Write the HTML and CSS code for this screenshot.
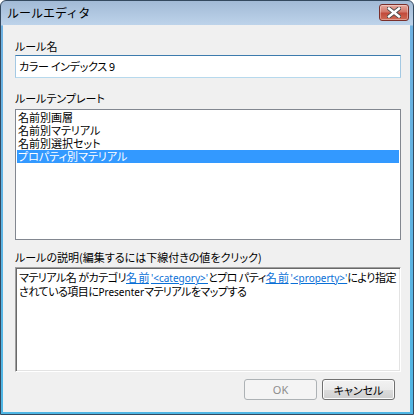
FILE: index.html
```html
<!DOCTYPE html>
<html lang="ja">
<head>
<meta charset="utf-8">
<link rel="stylesheet" href="styles.css">
</head>
<body>
<div class="window">
  <div class="titlebar">
    <span class="title">ルールエディタ</span>
    <div class="close">
      <svg width="14" height="11" viewBox="0 0 14 11">
        <path d="M2 1.5 L12 9.5 M12 1.5 L2 9.5" stroke="#4a4a4a" stroke-width="4.2" stroke-linecap="square"/>
        <path d="M2 1.5 L12 9.5 M12 1.5 L2 9.5" stroke="#ffffff" stroke-width="2.4" stroke-linecap="square"/>
      </svg>
    </div>
  </div>
  <div class="client">
    <div class="label l1">ルール名</div>
    <div class="input">カラー インデックス 9</div>
    <div class="label l2">ルールテンプレート</div>
    <div class="listbox">
      <div class="item">名前別画層</div>
      <div class="item">名前別マテリアル</div>
      <div class="item">名前別選択セット</div>
      <div class="item selected">プロパティ別マテリアル</div>
    </div>
    <div class="label l3">ルールの説明(編集するには下線付きの値をクリック)</div>
    <div class="desc">
      <div class="line">マテリアル名 がカテゴリ<span class="link">名 前</span> <span class="link lat">'&lt;category&gt;'</span>とプロ パティ<span class="link">名 前</span> <span class="link lat">'&lt;property&gt;'</span>により指定</div>
      <div class="line">されている項目に<span class="lat">Presenter</span>マテリアルをマップする</div>
    </div>
    <div class="buttons">
      <div class="btn disabled">OK</div>
      <div class="btn default">キャンセル</div>
    </div>
  </div>
</div>
</body>
</html>
```

FILE: styles.css
```css
html, body {
  margin: 0;
  padding: 0;
  background: #ffffff;
}
body {
  width: 414px;
  height: 415px;
  overflow: hidden;
  font-family: "Noto Sans CJK JP", "Noto Sans", sans-serif;
}
.window {
  width: 414px;
  height: 415px;
  box-sizing: border-box;
  border: 1px solid #34495f;
  border-radius: 6px 6px 0 0;
  background: linear-gradient(to bottom, #a2bad6 0px, #bdd3ea 24px, #6fb2e2 25px, #4fb6e4 100%);
  display: flex;
  flex-direction: column;
  overflow: hidden;
}
.titlebar {
  height: 24px;
  flex: none;
  display: flex;
  align-items: center;
  padding-left: 6px;
}
.title {
  font-size: 12px;
  color: #000;
  line-height: 14px;
}
.close {
  margin-left: auto;
  margin-right: 4px;
  align-self: flex-start;
  margin-top: 3px;
  width: 30px;
  height: 17px;
  box-sizing: border-box;
  border: 1px solid #7a2f2a;
  border-radius: 3px;
  background: linear-gradient(to bottom, #e6a99f 0%, #d3786b 45%, #c24a3b 55%, #cf6b55 100%);
  box-shadow: inset 0 0 0 1px rgba(255,255,255,0.35);
  display: flex;
  align-items: center;
  justify-content: center;
}
.close svg { display: block; }
.client {
  flex: 1;
  margin: 0 3px 2px 2px;
  background: #f0f0f0;
  padding: 14px 9px 0 12px;
  display: flex;
  flex-direction: column;
  font-size: 11px;
  font-feature-settings: "palt";
  color: #000;
}
.label {
  line-height: 14px;
  height: 14px;
  white-space: nowrap;
}
.l2 { margin-top: 13px; }
.l3 { margin-top: 10px; }
.input {
  margin-top: 2px;
  height: 23px;
  box-sizing: border-box;
  background: #fff;
  border: 1px solid #a4c9e3;
  border-top-color: #3d7bad;
  border-bottom-color: #b7d9ed;
  padding-left: 3px;
  line-height: 21px;
  white-space: pre;
  letter-spacing: -0.3px;
}
.listbox {
  margin-top: 4px;
  height: 131px;
  box-sizing: border-box;
  background: #fff;
  border: 1px solid #828790;
  padding: 1px 1px 0 1px;
}
.item {
  height: 13px;
  line-height: 13px;
  padding-left: 1px;
  white-space: nowrap;
}
.item.selected {
  background: #3399ff;
  color: #fff;
}
.desc {
  margin-top: 3px;
  height: 105px;
  box-sizing: border-box;
  background: #fff;
  border: 1px solid;
  border-color: #a0a0a0 #ffffff #ffffff #a0a0a0;
  box-shadow: inset 1px 1px 0 #696969, inset -1px -1px 0 #e3e3e3;
  padding: 2px 2px 0 3px;
}
.line {
  line-height: 14px;
  height: 14px;
  white-space: nowrap;
  letter-spacing: -0.5px;
}
.link {
  color: #0a6fd6;
  text-decoration: underline;
}
.lat {
  font-family: "Noto Sans", sans-serif;
  font-size: 10px;
  letter-spacing: 0;
}
.buttons {
  margin-top: 7px;
  display: flex;
  justify-content: flex-end;
  gap: 5px;
  padding-right: 6px;
}
.btn {
  width: 73px;
  height: 21px;
  box-sizing: border-box;
  border-radius: 3px;
  display: flex;
  align-items: center;
  justify-content: center;
  font-size: 11px;
}
.btn.disabled {
  border: 1px solid #adb2b5;
  background: #f4f4f4;
  color: #8d8d8d;
  font-family: "Noto Sans", sans-serif;
}
.btn.default {
  border: 1px solid #707070;
  background: linear-gradient(to bottom, #f2f2f2 0%, #ebebeb 50%, #dddddd 51%, #cfcfcf 100%);
  box-shadow: inset 0 0 0 1px #fcfcfc;
  color: #000;
}
```
